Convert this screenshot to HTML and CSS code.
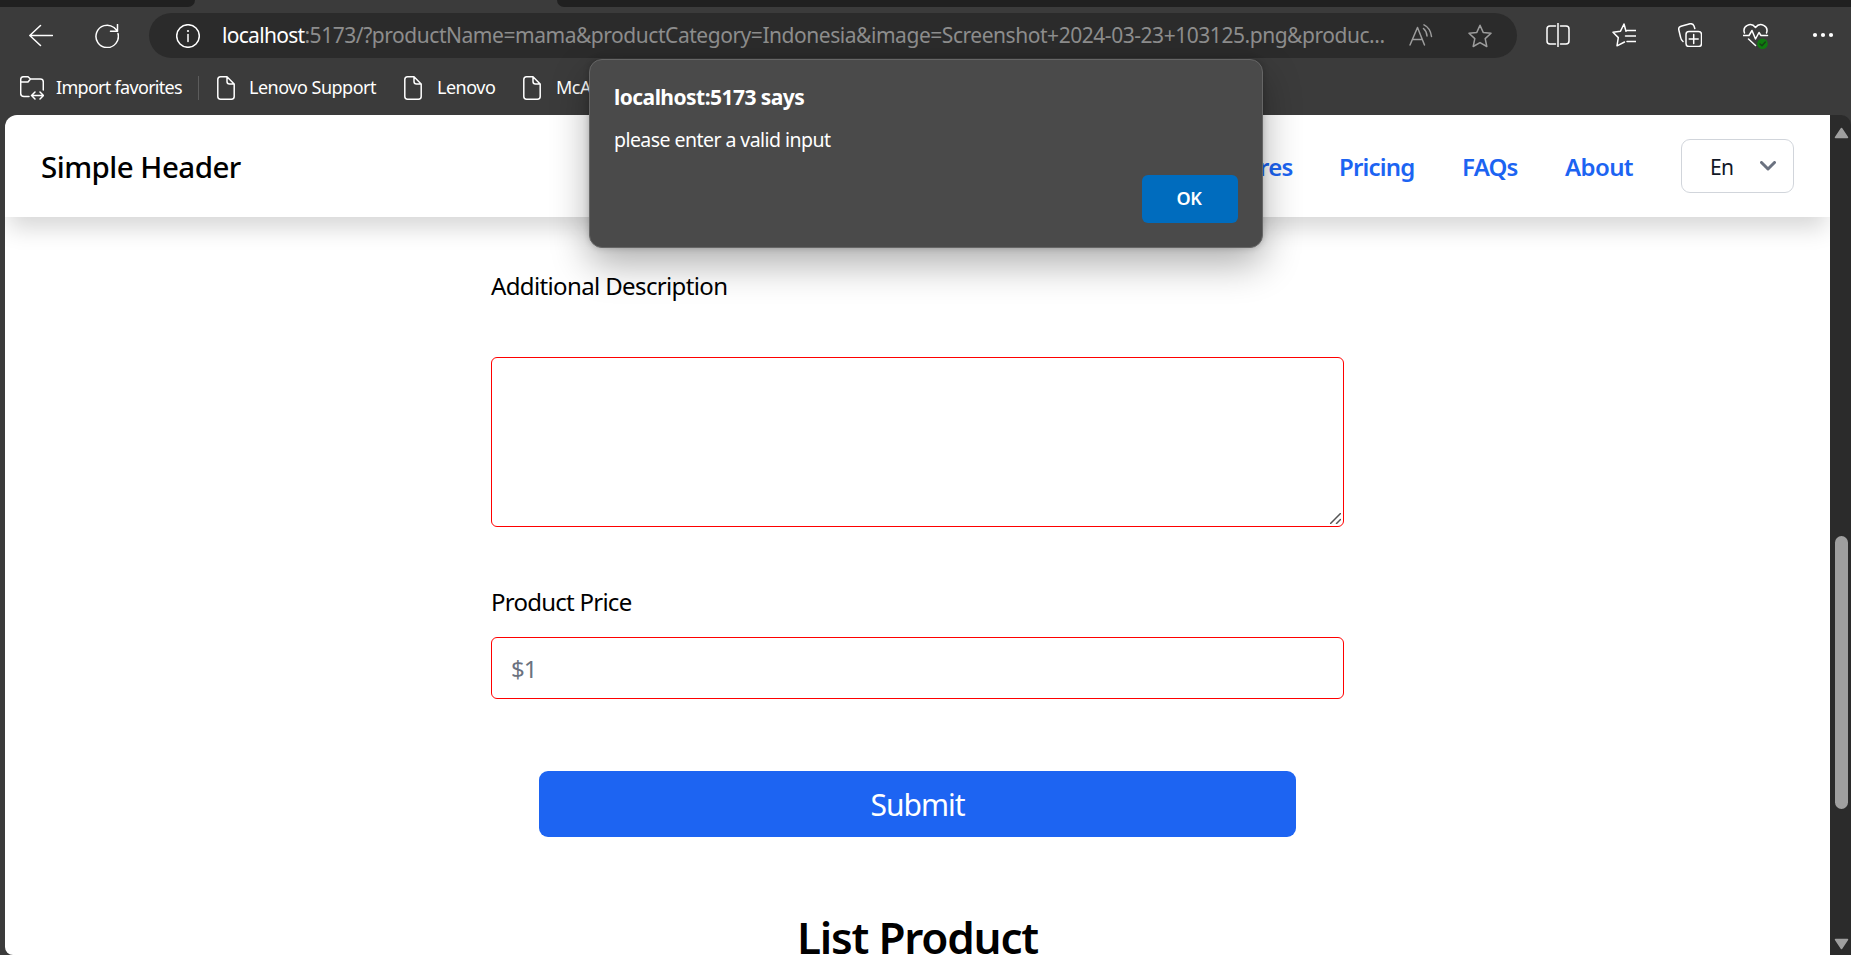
FILE: index.html
```
<!DOCTYPE html>
<html lang="en">
<head>
<meta charset="utf-8">
<title>Simple Header</title>
<link rel="stylesheet" href="styles.css">
</head>
<body>
<div class="window">
  <div class="tabs"><div class="tab-left"></div><div class="tab-active"></div><div class="tab-right"></div></div>
  <div class="toolbar">
    <svg class="icon back" viewBox="0 0 24 24"><path d="M23.500 11.500H1M11.500 1.500 .800 11.500 11.500 21.500"/></svg>
    <svg class="icon reload" viewBox="0 0 24 24"><path d="M23 9.500A11.200 11.200 0 1 1 19 3.500L22.500 7M22.500.500V7.300H15.500"/></svg>
    <div class="omnibox">
      <svg class="icon info" viewBox="0 0 24 24"><circle cx="12" cy="12" r="11.300"/><path d="M12 10.500V17.500"/><circle class="solid" cx="12" cy="7" r="1.100"/></svg>
      <div class="url"><span class="host">localhost</span><span class="path">:5173/?productName=mama&amp;productCategory=Indonesia&amp;image=Screenshot+2024-03-23+103125.png&amp;produc...</span></div>
      <svg class="icon read" viewBox="0 0 24 24"><path d="M1 21 8.500 3.500 15.500 21M3.500 15.500H13M14.500 4.500Q17.500 7 18 12M15 .800Q21.500 4 22.500 12.500"/></svg>
      <svg class="icon star" viewBox="0 0 24 24"><path d="M12 1.200 15.200 8.400 23 9.300 17.200 14.600 18.800 22.500 12 18.600 5.200 22.500 6.800 14.600 1 9.300 8.800 8.400Z"/></svg>
    </div>
    <div class="actions">
      <svg class="icon" viewBox="0 0 24 24"><path d="M12 0V24M9.500 3H4Q1 3 1 6V18Q1 21 4 21H9.500M14.500 3H20Q23 3 23 6V18Q23 21 20 21H14.500"/></svg>
      <svg class="icon" viewBox="0 0 24 24"><path d="M14 8.200 12 1 8.500 8.200 1 9.300 6.300 14.600 5 22.800 12.500 19M15 7.500H24M13.500 13H24M15 18.500H24"/></svg>
      <svg class="icon" viewBox="0 0 24 24"><rect x="8" y="8.500" width="15.500" height="15" rx="3"/><path d="M15.700 11.500V20.500M11.200 16H20.200M5 18.500Q3 17 2.500 14L.700 6.500Q.300 4 3 3.200L12 .800Q15 .300 16 3L16.800 5.500"/></svg>
      <svg class="icon health" viewBox="0 0 26 26"><path d="M1.500 10C-1 3 8 -1.500 12.500 4.500C17 -1.500 26 3 23.500 10M0 12.500H6L9 7.500 12.500 16 16 9.500 18 12.500H24.500M5.500 16 12.500 22.500"/><circle class="badge" cx="19.500" cy="20.700" r="5.300"/><path class="tick" d="M17 21 19 22.800 22.300 19"/></svg>
      <svg class="icon dots" viewBox="0 0 24 24"><circle cx="4" cy="12" r="2.100"/><circle cx="12" cy="12" r="2.100"/><circle cx="20" cy="12" r="2.100"/></svg>
    </div>
  </div>
  <div class="bookmarks">
    <svg class="icon" viewBox="0 0 24 24"><path d="M9 20.500H4Q.700 20.500 .700 17.500V3.500Q.700 .700 3.500 .700H8L10.500 3H20.500Q23.300 3 23.300 6V14M.700 6H8L10.500 3M11.500 19.500H23.500M15 16 11.500 19.500 15 23M20 16 23.500 19.500 20 23"/></svg>
    <span class="mark first">Import favorites</span><i class="sep"></i>
    <svg class="file" viewBox="0 0 18 24"><path d="M3.500.800H10L17.200 8V20.500Q17.200 23.200 14.500 23.200H3.500Q.800 23.200 .800 20.500V3.500Q.800 .800 3.500 .800ZM10 .800V5.500Q10 8 12.500 8H17.200"/></svg>
    <span class="mark second">Lenovo Support</span>
    <svg class="file" viewBox="0 0 18 24"><path d="M3.500.800H10L17.200 8V20.500Q17.200 23.200 14.500 23.200H3.500Q.800 23.200 .800 20.500V3.500Q.800 .800 3.500 .800ZM10 .800V5.500Q10 8 12.500 8H17.200"/></svg>
    <span class="mark third">Lenovo</span>
    <svg class="file" viewBox="0 0 18 24"><path d="M3.500.800H10L17.200 8V20.500Q17.200 23.200 14.500 23.200H3.500Q.800 23.200 .800 20.500V3.500Q.800 .800 3.500 .800ZM10 .800V5.500Q10 8 12.500 8H17.200"/></svg>
    <span class="mark fourth">McA</span>
  </div>
  <div class="viewport">
    <div class="page">
      <header class="header">
        <div class="brand">Simple Header</div>
        <nav class="nav"><a class="features">Features</a><a class="pricing">Pricing</a><a class="faqs">FAQs</a><a class="about">About</a></nav>
        <div class="select"><span>En</span><svg viewBox="0 0 16 10"><path d="M1.500 1.500 8 8 14.500 1.500"/></svg></div>
      </header>
      <main class="form">
        <label class="description">Additional Description</label>
        <div class="textarea"><svg viewBox="0 0 11 11"><path d="M.500 10.500 10.500.500M6.500 10.500 10.500 6.500"/></svg></div>
        <label class="price">Product Price</label>
        <div class="input">$1</div>
        <div class="submit">Submit</div>
        <h2>List Product</h2>
      </main>
    </div>
    <div class="scrollbar">
      <svg class="arrow" viewBox="0 0 15 12"><path d="M7.500 1.500 13.500 10.500H1.500Z"/></svg>
      <div class="thumb"></div>
      <svg class="arrow down" viewBox="0 0 15 12"><path d="M1.500 1.500H13.500L7.500 10.500Z"/></svg>
    </div>
  </div>
  <div class="dialog">
    <div class="title">localhost:5173 says</div>
    <div class="message">please enter a valid input</div>
    <div class="ok">OK</div>
  </div>
</div>
</body>
</html>
```
FILE: styles.css
```
* { box-sizing: border-box; }
body { margin: 0; font-family: "Noto Sans", "Open Sans", sans-serif; color: #000; }
.window { position: relative; width: 1851px; height: 955px; overflow: hidden; background: #3b3b3b; display: flex; flex-direction: column; }
svg { flex: none; fill: none; stroke: #fff; stroke-width: 1.5; stroke-linecap: round; stroke-linejoin: round; display: block; }
span, a { white-space: nowrap; }
.icon { width: 24px; height: 24px; }
.tabs { display: flex; flex: none; height: 7px; }
.tab-left { width: 195px; background: #202020; border-bottom-right-radius: 7px; }
.tab-active { width: 362px; }
.tab-right { flex: 1; background: #202020; border-bottom-left-radius: 7px; }
.toolbar { display: flex; flex: none; align-items: center; height: 57px; padding: 0 16px 0 29px; }
.reload { margin-left: 42px; }
.omnibox { flex: none; width: 1368px; height: 45px; margin-left: 30px; padding: 0 25px 0 27px; display: flex; align-items: center; border-radius: 23px; background: #2b2b2b; }
.url { flex: 1; min-width: 0; margin-left: 22px; padding-bottom: 1px; font-size: 21px; line-height: 28px; display: flex; }
.host { color: #fff; letter-spacing: -.7px; }
.path { color: #8d8d8d; letter-spacing: -.46px; }
.read, .star { stroke: #9d9d9d; }
.star { margin-left: 35px; }
.solid { fill: #fff; stroke: none; }
.actions { flex: 1; display: flex; justify-content: space-between; margin-left: 29px; }
.health { width: 26px; height: 26px; }
.badge { fill: #0f7b0f; stroke: none; }
.tick { stroke: #173f17; }
.dots { fill: #fff; stroke: none; }
.bookmarks { display: flex; flex: none; align-items: center; height: 51px; padding: 0 0 3px 20px; color: #fff; font-size: 18px; line-height: 24px; }
.file { width: 18px; height: 24px; }
.mark { margin-left: 14px; padding-bottom: 2px; }
.first { margin-left: 12px; width: 126px; letter-spacing: -.7px; }
.sep { width: 1px; height: 24px; background: #5c5c5c; margin: 0 18px 0 16px; }
.second { width: 128px; margin-right: 27px; letter-spacing: -.494px; }
.third { width: 58px; margin-left: 15px; margin-right: 28px; letter-spacing: -.5px; }
.fourth { margin-left: 15px; letter-spacing: -.5px; }
.viewport { display: flex; flex: 1; min-height: 0; padding-left: 5px; }
.page { width: 1825px; flex: none; background: #fff; border-radius: 12px 0 0 8px; overflow: hidden; }
.header { height: 102px; display: flex; align-items: center; padding: 0 36px; box-shadow: 0 15px 22px -4px rgba(0,0,0,.16); }
.brand { flex: 1; font-size: 29.5px; font-weight: 500; letter-spacing: -.52px; }
.nav { display: flex; gap: 48px; font-size: 24px; font-weight: 600; color: #1c64f2; letter-spacing: -.8px; }
.features { width: 94px; }
.pricing { width: 75px; }
.faqs { width: 55px; }
.about { width: 68px; letter-spacing: -.6px; }
.select { width: 113px; height: 54px; margin-left: 48px; padding: 0 17px 0 28px; border: 1px solid #d1d5db; border-radius: 9px; display: flex; align-items: center; justify-content: space-between; font-size: 21px; letter-spacing: -.6px; color: #111827; }
.select span { padding-top: 1px; }
.select svg { width: 16px; height: 10px; stroke: #6b7280; stroke-width: 3; }
.form { width: 853px; margin-left: 486px; padding-top: 51px; display: flex; flex-direction: column; }
label { font-size: 24px; line-height: 36px; }
.description { letter-spacing: -.63px; }
.textarea { height: 170px; margin-top: 53px; border: 1px solid #f00; border-radius: 6px; display: flex; align-items: flex-end; justify-content: flex-end; padding: 2px; }
.textarea svg { width: 11px; height: 11px; stroke: #555; }
.price { margin-top: 57px; letter-spacing: -.75px; }
.input { height: 62px; margin-top: 17px; border: 1px solid #f00; border-radius: 6px; padding: 0 19px; font-size: 24px; line-height: 61px; letter-spacing: -1px; color: #6b7280; }
.submit { height: 66px; margin: 72px 48px 0; border-radius: 9px; background: #1d64f2; color: #fff; text-align: center; font-size: 30px; line-height: 68px; letter-spacing: -1px; }
h2 { margin: 66px 0 0; text-align: center; font-size: 44px; line-height: 68px; font-weight: 600; letter-spacing: -1.2px; }
.scrollbar { flex: 1; background: #2b2b2b; border-top-right-radius: 10px; display: flex; flex-direction: column; align-items: center; padding: 12px 0 5px 2px; }
.arrow { width: 15px; height: 12px; fill: #9f9f9f; stroke: #9f9f9f; }
.thumb { width: 13px; height: 273px; margin-top: 397px; border-radius: 7px; background: #9f9f9f; }
.down { margin-top: auto; }
.dialog { position: absolute; left: 589px; top: 59px; width: 674px; height: 189px; padding: 23px 24px 24px; background: #4a4a4a; border: 1px solid #666; border-radius: 13px; color: #fff; box-shadow: 0 16px 38px rgba(0,0,0,.32), 0 0 6px rgba(0,0,0,.2); display: flex; flex-direction: column; }
.title { font-size: 21px; line-height: 28px; font-weight: 700; letter-spacing: -.54px; }
.message { font-size: 19.5px; line-height: 26px; margin-top: 16px; letter-spacing: -.55px; }
.ok { align-self: flex-end; width: 96px; height: 48px; padding-right: 2px; margin-top: 22px; border-radius: 6px; background: #006cbe; text-align: center; font-size: 18px; line-height: 47px; font-weight: 600; letter-spacing: -.5px; }
```
